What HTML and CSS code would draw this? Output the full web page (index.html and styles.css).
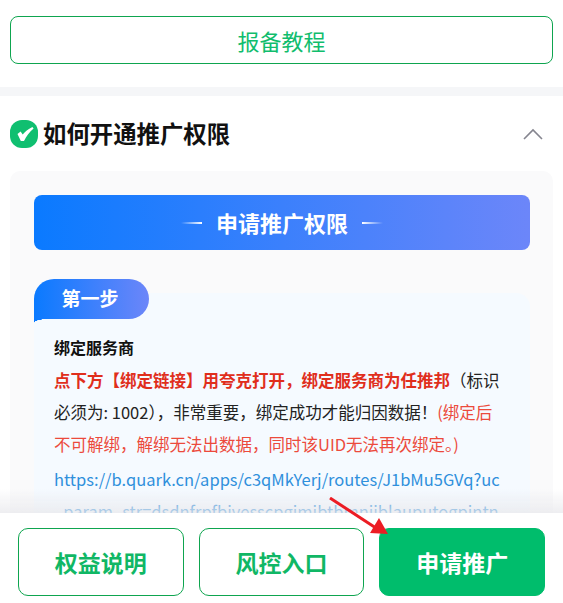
FILE: index.html
```html
<!DOCTYPE html>
<html lang="zh-CN">
<head>
	<meta charset="UTF-8">
	<meta name="viewport" content="width=device-width, initial-scale=1.0">
	<link rel="stylesheet" href="styles.css">
</head>
<body>
	<div class="top">
		<a class="outline-btn" href="#">报备教程</a>
	</div>
	<div class="section">
		<div class="section-head">
			<div class="section-title">
				<svg class="check" viewBox="0 0 28 28">
					<rect width="28" height="28" rx="12" fill="#10bf70"/>
					<path d="M7.5 14L10.6 11.4L12.7 14.4C15 11.8 18 9.3 22.4 7L23.6 8.4C19.4 12 16.4 16 14 21L10.8 21Z" fill="#fff"/>
				</svg>
				<h2>如何开通推广权限</h2>
			</div>
			<svg class="chevron" viewBox="0 0 20 12">
				<path d="M1 11L10 2l9 9" fill="none" stroke="#85858f" stroke-width="1.6"/>
			</svg>
		</div>
		<div class="card">
			<div class="banner">
				<span class="dash"></span>
				<span class="banner-text">申请推广权限</span>
				<span class="dash dash-right"></span>
			</div>
			<div class="step">
				<div class="step-tab">第一步</div>
				<div class="step-body">
					<p class="step-title">绑定服务商</p>
					<p class="step-text"><b class="red-b">点下方【绑定链接】用夸克打开，绑定服务商为任推邦</b>（标识必须为: 1002），非常重要，绑定成功才能归因数据！<span class="red">(绑定后不可解绑，解绑无法出数据，同时该UID无法再次绑定。)</span></p>
					<a class="step-link" href="#">https://b.quark.cn/apps/c3qMkYerj/routes/J1bMu5GVq?uc_param_str=dsdnfrpfbivesscpgimibtbmnijblauputogpintn</a>
				</div>
			</div>
		</div>
	</div>
	<div class="footer">
		<a class="foot-btn" href="#">权益说明</a>
		<a class="foot-btn" href="#">风控入口</a>
		<a class="foot-btn foot-btn-main" href="#">申请推广</a>
	</div>
	<svg class="arrow" viewBox="0 0 70 50">
		<path d="M1 1L50 33" stroke="#ec1c24" stroke-width="3" fill="none"/>
		<path d="M59 37L50 21L41 36Z" fill="#ec1c24"/>
	</svg>
</body>
</html>
```

FILE: styles.css
```css
html, body {
	margin: 0;
	height: 603px;
	overflow: hidden;
	background: #fff;
}
body {
	font-family: "Noto Sans CJK SC", "Noto Sans", sans-serif;
	color: #111;
}
a {
	text-decoration: none;
}
.top {
	padding: 16px 10px 23px;
	border-bottom: 9px solid #f5f6f8;
}
.outline-btn {
	display: flex;
	align-items: center;
	justify-content: center;
	height: 46px;
	border: 1px solid #0ea54f;
	border-radius: 8px;
	color: #10bd6d;
	font-size: 22px;
}
.section {
	padding: 0 10px;
}
.section-head {
	display: flex;
	align-items: center;
	justify-content: space-between;
	height: 75px;
	padding-right: 10px;
}
.section-title {
	display: flex;
	align-items: center;
	gap: 5px;
}
.check {
	width: 28px;
	height: 28px;
}
h2 {
	margin: 0;
	padding-bottom: 2px;
	font-size: 23.4px;
	font-weight: 700;
	line-height: 30px;
}
.chevron {
	width: 20px;
	height: 12px;
}
.card {
	padding: 24px 23px 0 24px;
	background: #fafafb;
	border-radius: 10px;
}
.banner {
	display: flex;
	align-items: center;
	justify-content: center;
	gap: 14px;
	height: 55px;
	border-radius: 8px;
	background: linear-gradient(90deg, #0a7aff, #6c86f9);
	color: #fff;
	font-size: 22px;
	font-weight: 700;
}
.banner-text {
	padding-bottom: 2px;
}
.dash {
	width: 21px;
	height: 2px;
	background: linear-gradient(90deg, rgba(255,255,255,0), #fff);
}
.dash-right {
	background: linear-gradient(90deg, #fff, rgba(255,255,255,0));
}
.step {
	position: relative;
	margin-top: 29px;
	padding-top: 14px;
}
.step-tab {
	position: absolute;
	top: 0;
	left: 0;
	z-index: 1;
	display: flex;
	align-items: center;
	justify-content: center;
	width: 115px;
	height: 40px;
	padding: 0 3px 4px 0;
	box-sizing: border-box;
	border-radius: 20px 20px 20px 0;
	background: linear-gradient(90deg, #0a7aff, #6c86f9);
	color: #fff;
	font-size: 19px;
	font-weight: 700;
}
.step-tab:after {
	content: '';
	position: absolute;
	left: 0;
	top: 100%;
	width: 14px;
	height: 4px;
	background: radial-gradient(ellipse 14px 4px at 14px 4px, #f5faff 97%, #0a7aff 100%);
}
.step-body {
	box-sizing: border-box;
	height: 290px;
	padding: 41px 30px 0 20px;
	background: #f5faff;
	border-radius: 14px;
}
.step-title {
	margin: 0;
	font-size: 16px;
	font-weight: 700;
	line-height: 26px;
	color: #111;
}
.step-text {
	margin: 4px 0 0;
	font-size: 16.5px;
	line-height: 32px;
	color: #222;
}
.red-b {
	color: #e02e1c;
}
.red {
	color: #ec4a3c;
}
.step-link {
	display: block;
	margin-top: 3px;
	font-size: 16.5px;
	line-height: 32px;
	color: #2f90dc;
	word-break: break-all;
}
.footer {
	position: fixed;
	left: 0;
	right: 0;
	bottom: 0;
	display: flex;
	gap: 15px;
	height: 90px;
	padding: 15px 18px 0;
	box-sizing: border-box;
	background: #fff;
}
.footer:before {
	content: '';
	position: absolute;
	left: 0;
	right: 0;
	top: -24px;
	height: 24px;
	background: linear-gradient(180deg, rgba(232,232,236,0), rgba(232,232,236,.75));
}
.foot-btn {
	flex: 1;
	display: flex;
	align-items: center;
	justify-content: center;
	height: 68px;
	box-sizing: border-box;
	border: 1px solid #0ea54f;
	border-radius: 10px;
	color: #10b765;
	font-size: 23px;
	font-weight: 700;
}
.foot-btn-main {
	background: #00bd6c;
	border-color: #00bd6c;
	color: #fff;
}
.arrow {
	position: fixed;
	left: 329px;
	top: 497px;
	width: 70px;
	height: 50px;
}
```
